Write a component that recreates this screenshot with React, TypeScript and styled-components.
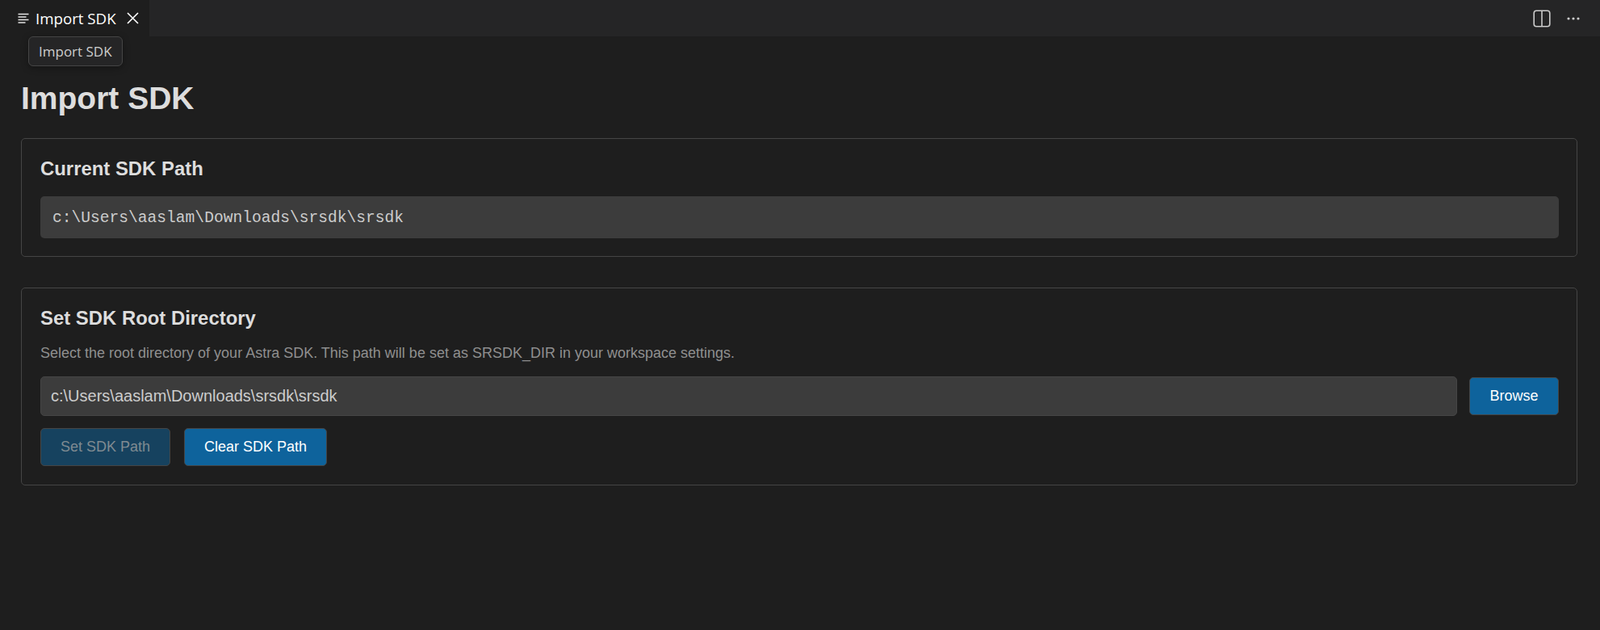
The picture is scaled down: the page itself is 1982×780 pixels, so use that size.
import React from "react";
import styled, { createGlobalStyle } from "styled-components";

const Global = createGlobalStyle`
  html, body { margin: 0; padding: 0; background: #1e1e1e; height: 100%; }
  body { font-family: "Liberation Sans", Arial, sans-serif; color: #cccccc; }
  * { box-sizing: border-box; }
`;

const Page = styled.div`
  position: relative;
  width: 1982px;
  height: 780px;
  overflow: hidden;
  background: #1e1e1e;
`;

const TabBar = styled.div`
  display: flex;
  align-items: stretch;
  justify-content: space-between;
  height: 45px;
  background: #252526;
`;

const Tab = styled.div`
  display: flex;
  align-items: center;
  width: 185px;
  padding-left: 22px;
  background: #1e1e1e;
  color: #ffffff;
  font-family: "Open Sans", "Noto Sans", sans-serif;
  font-size: 18.7px;
`;

const TabLabel = styled.span`
  margin-left: 8px;
  margin-right: 13px;
  white-space: nowrap;
`;

const Actions = styled.div`
  display: flex;
  align-items: center;
  gap: 20px;
  padding-right: 25px;
  color: #cccccc;
`;

const Tooltip = styled.div`
  position: absolute;
  left: 35px;
  top: 45px;
  height: 37px;
  padding: 0 12px;
  display: flex;
  align-items: center;
  background: #252526;
  border: 1px solid #454545;
  border-radius: 6px;
  box-shadow: 0 2px 8px rgba(0, 0, 0, 0.36);
  color: #cccccc;
  font-family: "Open Sans", "Noto Sans", sans-serif;
  font-size: 17px;
`;

const Content = styled.main`
  padding: 0 28px 0 26px;
`;

const Title = styled.h1`
  margin: 0;
  padding-top: 52px;
  height: 126px;
  font-size: 39px;
  line-height: 50px;
  font-weight: 700;
  color: #dddddd;
`;

const Card = styled.section`
  border: 1px solid #454545;
  border-radius: 5px;
  padding: 23px 22px 22px 23px;
  margin-bottom: 38px;
`;

const CardTitle = styled.h2`
  margin: 0 0 21px;
  font-size: 23.9px;
  line-height: 27px;
  font-weight: 700;
  color: #dddddd;
`;

const PathBox = styled.div`
  height: 52px;
  display: flex;
  align-items: center;
  padding: 1px 15px 0;
  background: #3c3c3c;
  border-radius: 5px;
  font-family: "Liberation Mono", "Courier New", monospace;
  font-size: 19.6px;
  color: #cccccc;
`;

const Description = styled.p`
  margin: -2px 0 18px;
  font-size: 18px;
  line-height: 22px;
  color: #8f8f8f;
`;

const Row = styled.div`
  display: flex;
  align-items: center;
  gap: 15px;
`;

const PathInput = styled.input`
  flex: 1;
  min-width: 0;
  height: 49px;
  padding: 0 12px;
  background: #3c3c3c;
  border: 1px solid #454545;
  border-radius: 5px;
  outline: none;
  color: #cccccc;
  font-family: "Liberation Sans", Arial, sans-serif;
  font-size: 20px;
`;

const Button = styled.button<{ $dim?: boolean }>`
  height: 47px;
  padding: 0 24px;
  background: ${(p) => (p.$dim ? "#16425f" : "#0e639c")};
  border: 1px solid #454545;
  border-radius: 5px;
  color: ${(p) => (p.$dim ? "#7f8a91" : "#ffffff")};
  font-family: "Liberation Sans", Arial, sans-serif;
  font-size: 18px;
  white-space: nowrap;
`;

const BrowseButton = styled(Button)`
  padding: 0 24.5px;
`;

const ButtonRow = styled(Row)`
  margin: 15px 0 1px;
  gap: 17px;
`;

const Icon = styled.svg`
  display: block;
  flex: none;
`;

export default function App() {
  return (
    <Page>
      <Global />
      <TabBar>
        <Tab>
          <Icon width="14" height="14" viewBox="0 0 14 14" fill="none" stroke="#e4e4e4" strokeWidth="1.4">
            <path d="M0.5 1.5h13M0.5 5h10M0.5 8.5h13M0.5 12h9" />
          </Icon>
          <TabLabel>Import SDK</TabLabel>
          <Icon width="15" height="15" viewBox="0 0 15 15" fill="none" stroke="#ffffff" strokeWidth="1.6">
            <path d="M1 1l13 13M14 1L1 14" />
          </Icon>
        </Tab>
        <Actions>
          <Icon width="22" height="22" viewBox="0 0 22 22" fill="none" stroke="#cccccc" strokeWidth="1.6">
            <rect x="1.2" y="1.2" width="19.6" height="19.6" rx="3" />
            <path d="M11 1.2v19.6" />
          </Icon>
          <Icon width="16" height="4" viewBox="0 0 16 4" fill="#cccccc">
            <circle cx="2" cy="2" r="1.6" />
            <circle cx="8" cy="2" r="1.6" />
            <circle cx="14" cy="2" r="1.6" />
          </Icon>
        </Actions>
      </TabBar>
      <Tooltip>Import SDK</Tooltip>
      <Content>
        <Title>Import SDK</Title>
        <Card>
          <CardTitle>Current SDK Path</CardTitle>
          <PathBox>c:\Users\aaslam\Downloads\srsdk\srsdk</PathBox>
        </Card>
        <Card>
          <CardTitle>Set SDK Root Directory</CardTitle>
          <Description>
            Select the root directory of your Astra SDK. This path will be set as SRSDK_DIR in your workspace settings.
          </Description>
          <Row>
            <PathInput readOnly value="c:\Users\aaslam\Downloads\srsdk\srsdk" />
            <BrowseButton>Browse</BrowseButton>
          </Row>
          <ButtonRow>
            <Button $dim>Set SDK Path</Button>
            <Button>Clear SDK Path</Button>
          </ButtonRow>
        </Card>
      </Content>
    </Page>
  );
}
